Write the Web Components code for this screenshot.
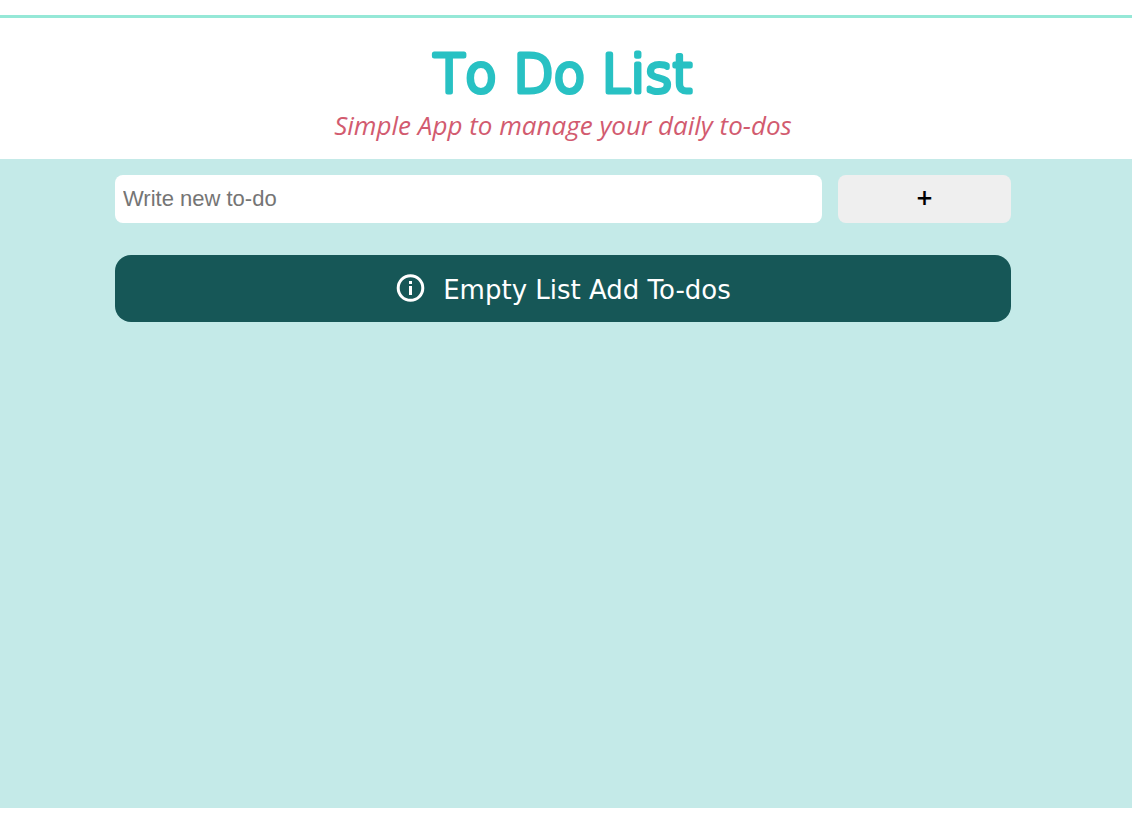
<!DOCTYPE html>
<html lang="en">
<head>
<meta charset="utf-8">
<meta name="viewport" content="width=device-width, initial-scale=1">
<title>To Do List</title>
<style>
body { margin: 0; background: #fff; font-family: "DejaVu Sans", Verdana, sans-serif; }
</style>
</head>
<body>
<todo-app></todo-app>
<script>
const define = (name, html) => {
  const template = document.createElement('template');
  template.innerHTML = html;
  customElements.define(name, class extends HTMLElement {
    constructor() {
      super();
      this.attachShadow({ mode: 'open' }).append(template.content.cloneNode(true));
    }
  });
};

define('todo-header', `
  <style>
    :host { display: block; border-top: 3px solid #95e8d7; padding: 24px 6px 16px 0; text-align: center; }
    h1 { margin: 0; height: 64px; }
    svg { display: block; width: 100%; height: 64px; }
    /* A light face with a thick round stroke gives the letters soft ends. */
    text { font: 200 52px "DejaVu Sans", "DejaVu Sans Light", sans-serif; font-kerning: none;
           fill: #28c1c3; stroke: #28c1c3; stroke-width: 5px; stroke-linejoin: round; text-anchor: middle; }
    p { margin: 0; padding-top: 2px; font: italic 400 26px/35px "Open Sans", "Noto Sans", sans-serif; color: #d25b6f; }
  </style>
  <h1><svg><text x="50%" y="50">To Do List</text></svg></h1>
  <p><slot></slot></p>
`);

define('todo-form', `
  <style>
    :host { display: block; }
    form { display: flex; gap: 16px; margin: 0; }
    input, button { box-sizing: border-box; height: 48px; margin: 0; border: 0; border-radius: 8px; color: #000; }
    input { flex: 1; min-width: 0; padding: 0 8px; background: #fff; font: 22px "Liberation Sans", Arial, sans-serif; }
    input::placeholder { color: #757575; opacity: 1; }
    button { width: 173px; padding: 0 0 4px; background: #efefef; font: 600 28px "Open Sans", sans-serif; }
  </style>
  <form>
    <input type="text" placeholder="Write new to-do" aria-label="Write new to-do">
    <button type="button" aria-label="Add to-do">+</button>
  </form>
`);

define('todo-notice', `
  <style>
    :host { display: flex; justify-content: center; align-items: flex-start; gap: 16px; box-sizing: border-box;
            padding: 17px 16px 14px; border-radius: 16px; background: #165757; color: #fff;
            font-size: 26px; line-height: 36px; }
    svg { flex: none; width: 32px; height: 32px; fill: none; stroke: currentColor; stroke-width: 3; }
  </style>
  <svg viewBox="0 0 32 32" aria-hidden="true"><circle cx="15.500" cy="16" r="12.300"/><path d="M15.500 9v3M15.500 14v9"/></svg>
  <span><slot></slot></span>
`);

define('todo-app', `
  <style>
    :host { display: flex; flex-direction: column; box-sizing: border-box; min-height: 100vh; padding: 15px 0 24px; }
    main { flex: 1; padding: 16px 121px 16px 115px; background: #c4eae8; }
    todo-notice { margin-top: 32px; }
  </style>
  <todo-header>Simple App to manage your daily to-dos</todo-header>
  <main>
    <todo-form></todo-form>
    <todo-notice>Empty List Add To-dos</todo-notice>
  </main>
`);
</script>
</body>
</html>
